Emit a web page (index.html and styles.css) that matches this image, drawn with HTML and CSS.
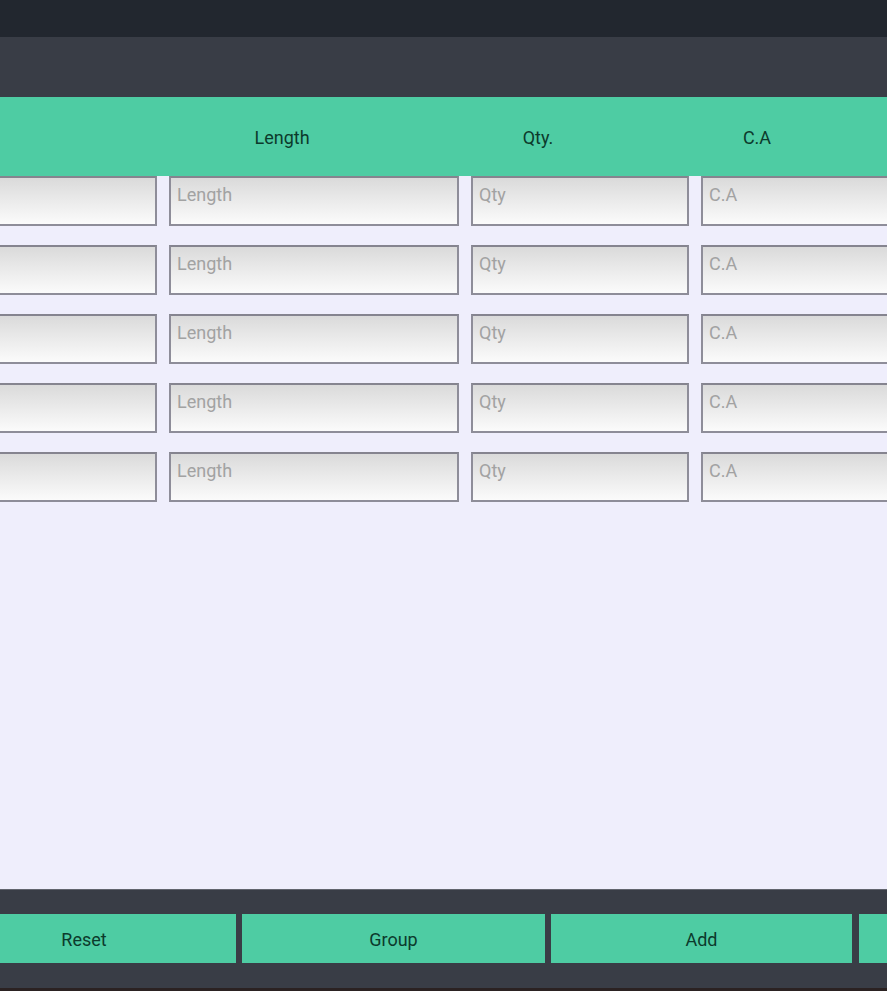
FILE: index.html
```html
<!DOCTYPE html>
<html>
<head>
<meta charset="utf-8">
<link rel="stylesheet" href="styles.css">
</head>
<body>
<div class="app">
  <div class="statusbar"></div>
  <div class="toolbar"></div>
  <div class="thead">
    <div class="th th-blank"></div>
    <div class="th th-len">Length</div>
    <div class="th th-qty">Qty.</div>
    <div class="th th-ca">C.A</div>
    <div class="th th-end"></div>
  </div>
  <div class="content">
    <div class="row">
      <input class="field f1" type="text">
      <input class="field f2" type="text" placeholder="Length">
      <input class="field f3" type="text" placeholder="Qty">
      <input class="field f4" type="text" placeholder="C.A">
    </div>
    <div class="row">
      <input class="field f1" type="text">
      <input class="field f2" type="text" placeholder="Length">
      <input class="field f3" type="text" placeholder="Qty">
      <input class="field f4" type="text" placeholder="C.A">
    </div>
    <div class="row">
      <input class="field f1" type="text">
      <input class="field f2" type="text" placeholder="Length">
      <input class="field f3" type="text" placeholder="Qty">
      <input class="field f4" type="text" placeholder="C.A">
    </div>
    <div class="row">
      <input class="field f1" type="text">
      <input class="field f2" type="text" placeholder="Length">
      <input class="field f3" type="text" placeholder="Qty">
      <input class="field f4" type="text" placeholder="C.A">
    </div>
    <div class="row">
      <input class="field f1" type="text">
      <input class="field f2" type="text" placeholder="Length">
      <input class="field f3" type="text" placeholder="Qty">
      <input class="field f4" type="text" placeholder="C.A">
    </div>
  </div>
  <div class="footer">
    <div class="buttons">
      <button class="btn b-reset">Reset</button>
      <button class="btn b-group">Group</button>
      <button class="btn b-add">Add</button>
      <button class="btn b-more"></button>
    </div>
  </div>
  <div class="bottomline"></div>
</div>
</body>
</html>
```

FILE: styles.css
```css
* { box-sizing: border-box; }
html, body {
  margin: 0;
  padding: 0;
  width: 887px;
  height: 991px;
  overflow: hidden;
  font-family: Roboto, "Liberation Sans", sans-serif;
}
.app {
  display: flex;
  flex-direction: column;
  height: 991px;
  width: 887px;
  background: #efeefc;
}
.statusbar {
  height: 37px;
  background: #22272f;
  flex: none;
}
.toolbar {
  height: 60px;
  background: #393d46;
  flex: none;
}
.thead {
  height: 79px;
  flex: none;
  background: #4ecca3;
  display: flex;
  align-items: center;
  color: #0c3a2c;
  font-size: 18px;
  padding-top: 2px;
}
.th { text-align: center; flex: none; }
.th-blank { width: 150px; }
.th-len { width: 264px; }
.th-qty { width: 248px; }
.th-ca { width: 190px; }
.th-end { flex: 1; }
.content {
  flex: 1;
  display: flex;
  flex-direction: column;
  gap: 19px;
}
.row {
  display: flex;
  gap: 12px;
  height: 50px;
}
.field {
  height: 50px;
  margin: 0;
  min-width: 0;
  flex: none;
  border: 2px solid #8e8d99;
  border-top-color: #85848f;
  border-radius: 0;
  background: linear-gradient(#dadada, #e9e9e9 45%, #fbfbfb);
  font-family: Roboto, "Liberation Sans", sans-serif;
  font-size: 18px;
  color: #333;
  padding: 0 6px 13px 6px;
  outline: none;
}
.field::placeholder { color: #a2a2a2; }
.f1 { width: 157px; border-left: none; }
.f2 { width: 290px; }
.f3 { width: 218px; }
.f4 { flex: 1 1 0; border-right: none; }
.footer {
  height: 99px;
  flex: none;
  background: #393d46;
  border-top: 1px solid #62656e;
  padding-top: 24px;
}
.buttons {
  display: flex;
  gap: 6px;
  height: 49px;
}
.btn {
  height: 49px;
  margin: 0;
  border: none;
  border-radius: 0;
  background: #4ecca3;
  color: #0c3a2c;
  font-family: Roboto, "Liberation Sans", sans-serif;
  font-size: 18px;
  padding: 2px 0 0 0;
  flex: none;
}
.b-reset { width: 236px; padding-right: 68px; }
.b-group { width: 303px; }
.b-add { width: 301px; margin-right: 1px; }
.b-more { flex: 1; }
.bottomline {
  height: 3px;
  flex: none;
  background: #2b2222;
}
```
